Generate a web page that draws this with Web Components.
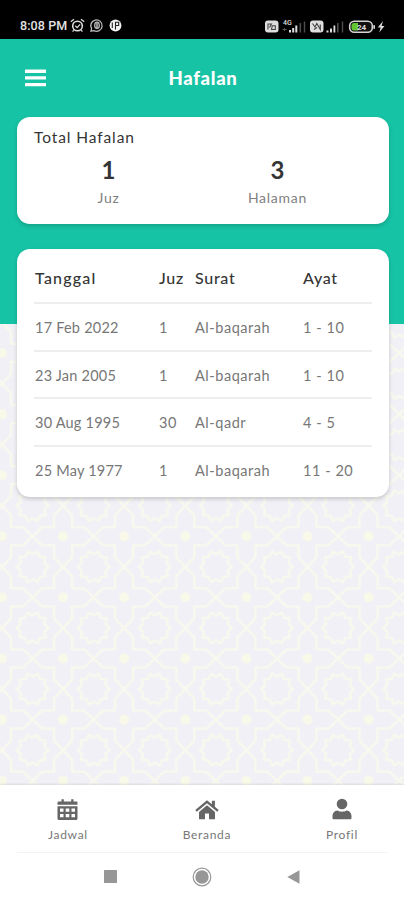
<!DOCTYPE html>
<html lang="id">
<head>
<meta charset="utf-8">
<meta name="viewport" content="width=device-width, initial-scale=1">
<title>Hafalan</title>
<style>
  body {
    margin: 0;
    font-family: Lato, "Noto Sans", sans-serif;
    color: #353535;
    background: #fff;
  }
</style>
</head>
<body>
<hafalan-app></hafalan-app>

<script>
class StatusBar extends HTMLElement {
  constructor() {
    super();
    this.attachShadow({ mode: "open" });
  }

  static get styles() {
    return /* css */`
      :host {
        display: flex;
        justify-content: space-between;
        align-items: center;
        box-sizing: border-box;
        height: 39px;
        padding: 13px 18px 0 20px;
        background: #000;
        color: #e4e4e4;
        font: 500 12.5px/14px Roboto, sans-serif;
      }

      .group {
        display: flex;
        align-items: center;
      }

      .time {
        width: 50px;
        letter-spacing: 0.1px;
        white-space: nowrap;
      }

      svg { display: block; }
    `;
  }

  connectedCallback() {
    this.render();
  }

  render() {
    this.shadowRoot.innerHTML = /* html */`
    <style>${StatusBar.styles}</style>
    <div class="group">
      <span class="time">8:08 PM</span>
      <svg width="54" height="16" viewBox="70 18 54 16" fill="none" stroke="#ddd" stroke-width="1.3">
        <circle cx="77.5" cy="26" r="4.8" stroke-width="1.6"/>
        <path d="M70.8 21.8l3.2-2.6M84.2 21.8L81 19.2M73.8 30.2l-1.2 1.4M81.2 30.2l1.2 1.4M75.3 25.8l1.8 1.8 3-3.2"/>
        <path d="M91 31.2l.6-2.6a5.700 5.700 0 1 1 2.300 2.100z" stroke="#bbb"/>
        <ellipse cx="97" cy="25.3" rx="2.3" ry="3.2" stroke="#bbb"/>
        <path d="M97 23v5" stroke="#bbb" stroke-width="1.5"/>
        <circle cx="115.500" cy="25.500" r="5.900" fill="#f2f2f2" stroke="none"/>
        <path d="M115.500 29.500v-7.300h3.200v3.300h-3.200M112.300 22.500v5.500" stroke="#222" stroke-width="1.1"/>
      </svg>
    </div>
    <svg width="121" height="18" viewBox="265 16 121 18">
      <g fill="#dedede">
        <rect x="265" y="19.5" width="13.5" height="12" rx="3"/>
        <rect x="310" y="19.5" width="13.5" height="12" rx="3"/>
        <path d="M289 29h2v2.500h-2zM292.200 27h2v4.500h-2zM295.300 24.500h2v7h-2zM326.500 29.500h2v2h-2zM330 27.500h2v4h-2zM333.500 24.500h1.800v7h-1.800z"/>
        <path d="M383 20l-5.200 6.400h2.900l-1.500 5 5.300-6.500h-2.900z"/>
      </g>
      <path d="M299.500 22h1.600v9.500h-1.600zM303.800 20.500h1.400v11h-1.400zM337 22h1.600v9.500H337zM341.800 20.500h1.400v11h-1.400z" fill="#4d4d4d"/>
      <path d="M282.500 28.500h4M284.500 27v3" stroke="#555" fill="none"/>
      <g fill="none" stroke="#444" stroke-width="1.1">
        <path d="M268 28.500V23h3.500l-2 3.500M271.500 28.500h3.800v-3.800h-3zM312.500 22.500l2.500 3.500 1.800-3.500 3.500 6v-5M314 28.500l3-2"/>
      </g>
      <text x="283" y="24" fill="#ddd" font-family="Roboto, sans-serif" font-size="7">4G</text>
      <rect x="349.700" y="20.200" width="22.600" height="11" rx="4.5" fill="#111" stroke="#d4d4d4" stroke-width="1.6"/>
      <path d="M354 22h4v7.500h-4a2.500 2.500 0 0 1-2.500-2.500v-2.500a2.500 2.500 0 0 1 2.500-2.500z" fill="#62c430"/>
      <rect x="373.300" y="24" width="1.7" height="4" rx=".8" fill="#d4d4d4"/>
      <text x="357" y="28.700" fill="#ddd" font-family="Roboto, sans-serif" font-size="8" font-weight="700">24</text>
    </svg>`;
  }
}

class AppHeader extends HTMLElement {
  constructor() {
    super();
    this.attachShadow({ mode: "open" });
  }

  static get styles() {
    return /* css */`
      :host {
        display: grid;
        grid-template-columns: 1fr auto 1fr;
        align-items: center;
        height: 78px;
        padding: 0 24px;
        color: #fff;
      }

      .title {
        padding-left: 2px;
        font-size: 18.5px;
        font-weight: 900;
        line-height: 24px;
        letter-spacing: 0.7px;
      }

      svg { display: block; }
    `;
  }

  connectedCallback() {
    this.render();
  }

  render() {
    this.shadowRoot.innerHTML = /* html */`
    <style>${AppHeader.styles}</style>
    <svg width="23" height="18" viewBox="0 0 23 18" fill="#fff">
      <rect x="1" y="0.5" width="21" height="3.4" rx=".5"/>
      <rect x="1" y="7.2" width="21" height="3.4" rx=".5"/>
      <rect x="1" y="13.9" width="21" height="3.4" rx=".5"/>
    </svg>
    <span class="title"><slot></slot></span>`;
  }
}

class PanelCard extends HTMLElement {
  constructor() {
    super();
    this.attachShadow({ mode: "open" });
  }

  static get styles() {
    return /* css */`
      :host {
        display: block;
        box-sizing: border-box;
        margin: 0 15px 0 17px;
        padding: 0 17px;
        border-radius: 13px;
        background: #fff;
        box-shadow: 0 2px 4px #0000002e;
      }
    `;
  }

  connectedCallback() {
    this.shadowRoot.innerHTML = /* html */`
    <style>${PanelCard.styles}</style>
    <slot></slot>`;
  }
}

class TotalItem extends HTMLElement {
  constructor() {
    super();
    this.attachShadow({ mode: "open" });
  }

  static get styles() {
    return /* css */`
      :host {
        display: flex;
        flex: 1;
        flex-direction: column;
        align-items: center;
      }

      .value {
        font-size: 24px;
        font-weight: 700;
        line-height: 30px;
      }

      .label {
        color: #808080;
        font-size: 14px;
        line-height: 25px;
        letter-spacing: 0.75px;
      }
    `;
  }

  connectedCallback() {
    this.shadowRoot.innerHTML = /* html */`
    <style>${TotalItem.styles}</style>
    <span class="value">${this.getAttribute("value")}</span>
    <span class="label"><slot></slot></span>`;
  }
}

class HafalanTable extends HTMLElement {
  constructor() {
    super();
    this.attachShadow({ mode: "open" });
    this.rows = [
      ["17 Feb 2022", "1", "Al-baqarah", "1 - 10"],
      ["23 Jan 2005", "1", "Al-baqarah", "1 - 10"],
      ["30 Aug 1995", "30", "Al-qadr", "4 - 5"],
      ["25 May 1977", "1", "Al-baqarah", "11 - 20"]
    ];
  }

  static get styles() {
    return /* css */`
      :host {
        display: block;
        padding: 4px 0 1px;
      }

      .row {
        display: grid;
        grid-template-columns: 124px 36px 108px 1fr;
        align-items: center;
        box-sizing: border-box;
        height: 47.5px;
        padding: 2px 0 0 1px;
        color: #777;
        font-size: 14.5px;
        letter-spacing: 0.55px;
        white-space: nowrap;
      }

      .row span:first-child {
        letter-spacing: 0.22px;
      }

      .row + .row {
        border-top: 2px solid #eee;
      }

      .head {
        height: 49px;
        padding-top: 0;
        color: #353535;
        font-size: 16px;
        font-weight: 500;
        letter-spacing: 0.7px;
      }

      .head span:first-child {
        letter-spacing: 1.2px;
      }
    `;
  }

  connectedCallback() {
    this.render();
  }

  row(cells, name) {
    return `<div class="${name}">${cells.map(cell => `<span>${cell}</span>`).join("")}</div>`;
  }

  render() {
    this.shadowRoot.innerHTML = /* html */`
    <style>${HafalanTable.styles}</style>
    ${this.row(["Tanggal", "Juz", "Surat", "Ayat"], "row head")}
    ${this.rows.map(cells => this.row(cells, "row")).join("")}`;
  }
}

class GirihPattern extends HTMLElement {
  constructor() {
    super();
    this.attachShadow({ mode: "open" });
  }

  static get styles() {
    return /* css */`
      :host {
        display: block;
        background: #f0f0f6;
      }

      svg {
        display: block;
        width: 100%;
        height: 100%;
      }
    `;
  }

  // rosette in the middle of a tile, alternating outer and inner radius
  rosette(points) {
    return Array.from({ length: points * 2 }, (_, i) => {
      const r = i % 2 ? 12.5 : 16;
      const a = Math.PI * i / points;
      return `${(30.55 + r * Math.cos(a)).toFixed(1)},${(30.55 + r * Math.sin(a)).toFixed(1)}`;
    }).join(" ");
  }

  connectedCallback() {
    this.shadowRoot.innerHTML = /* html */`
    <style>${GirihPattern.styles}</style>
    <svg>
      <defs>
        <pattern id="tile" width="61.1" height="61.1" patternUnits="userSpaceOnUse" patternTransform="translate(2 29)">
          <g fill="none" stroke="#f8f8ee" stroke-width="2.6" stroke-linejoin="round">
            <path d="M0 30.550L9 21V9h12L30.550 0M30.550 0L40 9h12v12l9.100 9.550M61.100 30.550L52 40v12H40l-9.450 9.100M30.550 61.100L21 52H9V40L0 30.550"/>
            <polygon points="${this.rosette(10)}"/>
          </g>
          <g fill="#f9f9e9">
            <circle r="5"/>
            <circle cx="61.1" r="5"/>
            <circle cy="61.1" r="5"/>
            <circle cx="61.1" cy="61.1" r="5"/>
          </g>
        </pattern>
      </defs>
      <rect width="100%" height="100%" fill="url(#tile)"/>
    </svg>`;
  }
}

class NavItem extends HTMLElement {
  constructor() {
    super();
    this.attachShadow({ mode: "open" });
  }

  static get icons() {
    return {
      calendar: `
        <path fill-rule="evenodd" d="M1.500 3.500h3V1.200h2.300v2.300h7.400V1.200h2.300v2.300h3a1 1 0 0 1 1 1v2.300H.5V4.500a1 1 0 0 1 1-1zM.5 8.300h20v12.200a1.500 1.500 0 0 1-1.500 1.500H2A1.500 1.500 0 0 1 .5 20.500zM3 10.500v3.200h3.500v-3.200zM8.700 10.500v3.200h3.600v-3.200zM14.500 10.500v3.200H18v-3.200zM3 16v3.200h3.500V16zM8.700 16v3.200h3.600V16zM14.500 16v3.200H18V16z"/>`,
      home: `
        <path d="M12 2.200L.3 12l1.500 1.700L12 5.200l10.200 8.500 1.500-1.700-3.800-3.200V2.700h-3v3.600z"/>
        <path d="M12 7.200L4 13.900v7.300h6v-5.600h4v5.600h6v-7.300z"/>`,
      user: `
        <circle cx="10" cy="6" r="5.300"/>
        <path d="M5.500 12.500c1.200.8 2.800 1.200 4.500 1.200s3.300-.4 4.500-1.200c3.400.3 5 2.800 5 5.900v1.500c0 .8-.6 1.400-1.400 1.400H1.900c-.8 0-1.400-.6-1.400-1.400v-1.500c0-3.100 1.600-5.600 5-5.900z"/>`
    };
  }

  static get styles() {
    return /* css */`
      :host {
        display: flex;
        flex-direction: column;
        align-items: center;
        gap: 6px;
        color: #777;
        font-size: 12px;
        line-height: 16px;
        letter-spacing: 0.7px;
      }

      svg {
        display: block;
        fill: #666;
      }
    `;
  }

  connectedCallback() {
    const icon = this.getAttribute("icon");
    const width = { calendar: 21, home: 24, user: 20 }[icon];

    this.shadowRoot.innerHTML = /* html */`
    <style>${NavItem.styles}</style>
    <svg width="${width}" height="23" viewBox="0 0 ${width} 23">${NavItem.icons[icon]}</svg>
    <span><slot></slot></span>`;
  }
}

class SystemKeys extends HTMLElement {
  constructor() {
    super();
    this.attachShadow({ mode: "open" });
  }

  static get styles() {
    return /* css */`
      :host {
        display: flex;
        justify-content: space-between;
        align-items: center;
        box-sizing: border-box;
        height: 48px;
        margin: 0 17px;
        padding: 0 87px;
        border-top: 1px solid #f4f4f4;
      }

      svg {
        display: block;
        fill: #979797;
      }
    `;
  }

  connectedCallback() {
    this.shadowRoot.innerHTML = /* html */`
    <style>${SystemKeys.styles}</style>
    <svg width="13" height="13"><rect width="13" height="13" rx=".5"/></svg>
    <svg width="20" height="20">
      <circle cx="10" cy="10" r="6.7"/>
      <circle cx="10" cy="10" r="8.8" fill="none" stroke="#979797" stroke-width="1.2"/>
    </svg>
    <svg width="13" height="14"><path d="M12.5.3v13.4L.3 7z"/></svg>`;
  }
}

class HafalanApp extends HTMLElement {
  constructor() {
    super();
    this.attachShadow({ mode: "open" });
  }

  static get styles() {
    return /* css */`
      :host {
        display: flex;
        flex-direction: column;
        width: 404px;
        height: 900px;
        overflow: hidden;
      }

      /* the page backdrop and its content share one grid cell */
      main {
        display: grid;
        grid-template-rows: 746px;
        height: 746px;
      }

      .backdrop,
      .content {
        grid-area: 1 / 1;
      }

      .backdrop {
        display: grid;
        grid-template-rows: 285px 1fr;
      }

      .green { background: #17c3a5; }

      .total {
        height: 107px;
        margin-bottom: 25px;
        padding-top: 9px;
      }

      .heading {
        font-size: 15.5px;
        line-height: 23px;
        letter-spacing: 0.9px;
      }

      .totals {
        display: flex;
        width: 338px;
        padding-top: 6px;
        margin-left: -10px;
      }

      .table { height: 248px; }

      nav {
        display: flex;
        justify-content: space-between;
        box-sizing: border-box;
        height: 67px;
        padding: 13px 46px 0 48px;
        background: #fff;
        box-shadow: 0 -1px 2px #0000001a;
        z-index: 1;
      }
    `;
  }

  connectedCallback() {
    this.render();
  }

  render() {
    this.shadowRoot.innerHTML = /* html */`
    <style>${HafalanApp.styles}</style>
    <status-bar></status-bar>
    <main>
      <div class="backdrop">
        <div class="green"></div>
        <girih-pattern></girih-pattern>
      </div>
      <div class="content">
        <app-header>Hafalan</app-header>
        <panel-card class="total">
          <div class="heading">Total Hafalan</div>
          <div class="totals">
            <total-item value="1">Juz</total-item>
            <total-item value="3">Halaman</total-item>
          </div>
        </panel-card>
        <panel-card class="table">
          <hafalan-table></hafalan-table>
        </panel-card>
      </div>
    </main>
    <nav>
      <nav-item icon="calendar">Jadwal</nav-item>
      <nav-item icon="home">Beranda</nav-item>
      <nav-item icon="user">Profil</nav-item>
    </nav>
    <system-keys></system-keys>`;
  }
}

customElements.define("status-bar", StatusBar);
customElements.define("app-header", AppHeader);
customElements.define("panel-card", PanelCard);
customElements.define("total-item", TotalItem);
customElements.define("hafalan-table", HafalanTable);
customElements.define("girih-pattern", GirihPattern);
customElements.define("nav-item", NavItem);
customElements.define("system-keys", SystemKeys);
customElements.define("hafalan-app", HafalanApp);
</script>
</body>
</html>
